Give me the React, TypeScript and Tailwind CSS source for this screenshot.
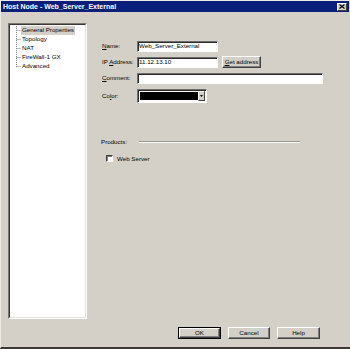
import React from "react";

const font = "font-['Liberation_Sans',Arial,sans-serif]";

const treeItems = ["General Properties", "Topology", "NAT", "FireWall-1 GX", "Advanced"];

function Sunken({ className, children }: { className?: string; children?: React.ReactNode }) {
  return (
    <div
      className={`border border-t-[#6f6f6f] border-l-[#6f6f6f] border-b-white border-r-white bg-white shadow-[inset_1px_1px_0_#2a2a2a] ${className ?? ""}`}
    >
      {children}
    </div>
  );
}

function Btn({ children, w, def }: { children: React.ReactNode; w: string; def?: boolean }) {
  return (
    <div className={`${def ? "border border-black" : ""} ${w} h-[12px] flex`}>
      <div className="flex-1 flex items-center justify-center border border-t-white border-l-white border-b-[#404040] border-r-[#404040] shadow-[inset_-1px_-1px_0_#808080] text-[6.2px] leading-none text-black">
        {children}
      </div>
    </div>
  );
}

function Label({ pre, u, post }: { pre?: string; u: string; post: string }) {
  return (
    <span className="w-[35px] shrink-0 text-[6.2px] leading-none text-black whitespace-nowrap">
      {pre}
      <span className="underline underline-offset-[1px]">{u}</span>
      {post}
    </span>
  );
}

export default function App() {
  return (
    <div
      className={`${font} w-[350px] h-[349px] bg-[#d4d0c8] flex flex-col border-l border-t border-l-[#eeeae4] border-t-[#eeeae4] border-b-2 border-b-[#3a3632] overflow-hidden`}
    >
      {/* title bar */}
      <div className="h-[11px] mr-[1px] bg-[#0a1f7a] flex items-center justify-between pl-[2px] pr-[2px]">
        <span className="text-white font-bold text-[7px] leading-none whitespace-nowrap">
          Host Node - Web_Server_External
        </span>
        <div className="w-[10px] h-[8px] bg-[#d4d0c8] border border-t-white border-l-white border-b-[#404040] border-r-[#404040] flex items-center justify-center">
          <svg width="6" height="5" viewBox="0 0 6 5">
            <path d="M0.5 0.5 L5.5 4.5 M5.5 0.5 L0.5 4.5" stroke="black" strokeWidth="1.1" />
          </svg>
        </div>
      </div>

      {/* body */}
      <div className="flex-1 flex pt-[11px] pl-[7px]">
        {/* tree */}
        <div className="w-[79px] border border-t-[#7a7670] border-l-[#7a7670] border-b-white border-r-white">
          <div className="h-full bg-white border border-t-[#3a3632] border-l-[#3a3632] border-b-[#e4e0d8] border-r-[#e4e0d8] flex pt-[1px]">
            <svg width="11" height="45" viewBox="0 0 11 45" className="shrink-0">
              <g stroke="#808080" strokeWidth="1" strokeDasharray="1 1">
                <path d="M6.5 0 V40.5" />
                <path d="M6.5 4.5 H11" />
                <path d="M6.5 13.5 H11" />
                <path d="M6.5 22.5 H11" />
                <path d="M6.5 31.5 H11" />
                <path d="M6.5 40.5 H11" />
              </g>
            </svg>
            <div className="flex flex-col">
              {treeItems.map((t, i) => (
                <div key={t} className="h-[9px] flex items-center">
                  <span
                    className={`text-[6.2px] leading-none text-black whitespace-nowrap px-[1px] py-[1px] ${
                      i === 0 ? "bg-[#d4d0c8]" : ""
                    }`}
                  >
                    {t}
                  </span>
                </div>
              ))}
            </div>
          </div>
        </div>

        {/* form */}
        <div className="flex flex-col pl-[15px] pt-[18px]">
          <div className="flex items-center h-[11px]">
            <Label u="N" post="ame:" />
            <Sunken className="w-[81px] h-[11px] flex items-center pl-[1px]">
              <span className="text-[6.2px] leading-none text-black whitespace-nowrap">Web_Server_External</span>
            </Sunken>
          </div>
          <div className="flex items-center h-[12px] mt-[4px]">
            <Label pre="IP " u="A" post="ddress:" />
            <Sunken className="w-[81px] h-[11px] flex items-center pl-[1px]">
              <span className="text-[6.2px] leading-none text-black whitespace-nowrap">11.12.13.10</span>
            </Sunken>
            <div className="ml-[4px]">
              <Btn w="w-[39px]">
                <span className="underline underline-offset-[1px]">G</span>et address
              </Btn>
            </div>
          </div>
          <div className="flex items-center h-[11px] mt-[5px]">
            <Label u="C" post="omment:" />
            <Sunken className="w-[186px] h-[11px]" />
          </div>
          <div className="flex items-center h-[14px] mt-[5px]">
            <Label pre="Co" u="l" post="or:" />
            <Sunken className="w-[70px] h-[14px] flex items-center pl-[2px] pr-[1px]">
              <div className="w-[59px] h-[8px] bg-black" />
              <div className="ml-auto w-[7px] h-[10px] bg-[#d4d0c8] border border-t-white border-l-white border-b-[#404040] border-r-[#404040] flex items-center justify-center">
                <svg width="3" height="2" viewBox="0 0 3 2">
                  <path d="M0 0 H3 L1.5 2 Z" fill="black" />
                </svg>
              </div>
            </Sunken>
          </div>

          <div className="flex items-center mt-[36px] w-[199px] -ml-[1px]">
            <span className="text-[6.2px] leading-none text-black">Products:</span>
            <div className="flex-1 ml-[12px] border-t border-t-[#9a968e] border-b border-b-white" />
          </div>
          <div className="flex items-center mt-[10px] pl-[4px]">
            <div className="w-[7px] h-[7px] bg-white border border-t-[#404040] border-l-[#404040] border-b-white border-r-white shadow-[inset_1px_1px_0_#808080]" />
            <span className="ml-[4px] text-[6.2px] leading-none text-black">Web Server</span>
          </div>
        </div>
      </div>

      {/* buttons */}
      <div className="flex justify-end gap-[7px] pr-[30px] pt-[8px] pb-[8px]">
        <Btn w="w-[43px]" def>
          OK
        </Btn>
        <Btn w="w-[42px]">Cancel</Btn>
        <Btn w="w-[43px]">Help</Btn>
      </div>
    </div>
  );
}
